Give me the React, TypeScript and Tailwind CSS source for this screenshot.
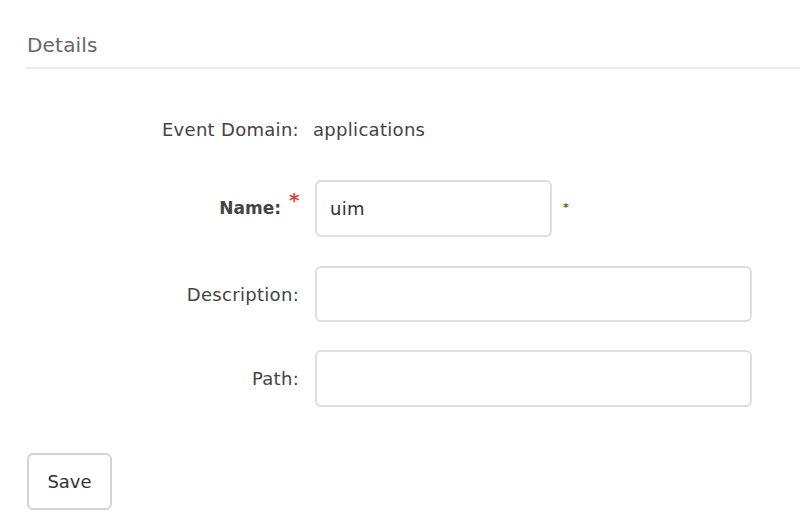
export default function App() {
  const font = { fontFamily: '"DejaVu Sans", "Open Sans", sans-serif' };
  return (
    <div className="w-[800px] h-[530px] bg-white overflow-hidden" style={font}>
      <div className="pl-[26px]">
        <div className="h-[69px] border-b-2 border-[#ececec] flex items-start pt-[32px]">
          <h2 className="text-[20px] leading-[26px] tracking-[0.2px] text-[#666] pl-[1px]">Details</h2>
        </div>

        <div className="pt-[32px]">
          {/* Event Domain */}
          <div className="flex items-center h-[56px]">
            <div className="w-[273px] text-right text-[18px] tracking-[0.3px] text-[#444]">Event Domain:</div>
            <div className="ml-[14px] text-[18px] tracking-[0.3px] text-[#444]">applications</div>
          </div>

          {/* Name */}
          <div className="flex items-center h-[57px] mt-[23px]">
            <div className="w-[273px] flex justify-end items-start">
              <span className="text-[17px] font-bold text-[#444]">Name:</span>
              <span className="text-[#d9443c] text-[20px] font-bold leading-none ml-[8px] -mt-[6px] w-[10px]">*</span>
            </div>
            <input
              defaultValue="uim"
              className="ml-[16px] w-[237px] h-[57px] rounded-[6px] border-2 border-[#dedede] px-[13px] text-[18px] tracking-[0.3px] text-[#333] outline-none"
              style={font}
            />
            <span className="ml-[11px] text-[11px] font-bold leading-none text-[#5f6a00] -mt-[2px]">*</span>
          </div>

          {/* Description */}
          <div className="flex items-center h-[56px] mt-[29px]">
            <div className="w-[273px] text-right text-[18px] tracking-[0.3px] text-[#444]">Description:</div>
            <input
              className="ml-[16px] w-[437px] h-[56px] rounded-[6px] border-2 border-[#dedede] px-[13px] text-[18px] outline-none"
              style={font}
            />
          </div>

          {/* Path */}
          <div className="flex items-center h-[57px] mt-[28px]">
            <div className="w-[273px] text-right text-[18px] tracking-[0.3px] text-[#444]">Path:</div>
            <input
              className="ml-[16px] w-[437px] h-[57px] rounded-[6px] border-2 border-[#dedede] px-[13px] text-[18px] outline-none"
              style={font}
            />
          </div>

          <button
            className="mt-[46px] ml-[1px] w-[85px] h-[57px] rounded-[6px] border-2 border-[#d4d4d4] bg-white text-[18px] text-[#333]"
            style={font}
          >
            Save
          </button>
        </div>
      </div>
    </div>
  );
}
